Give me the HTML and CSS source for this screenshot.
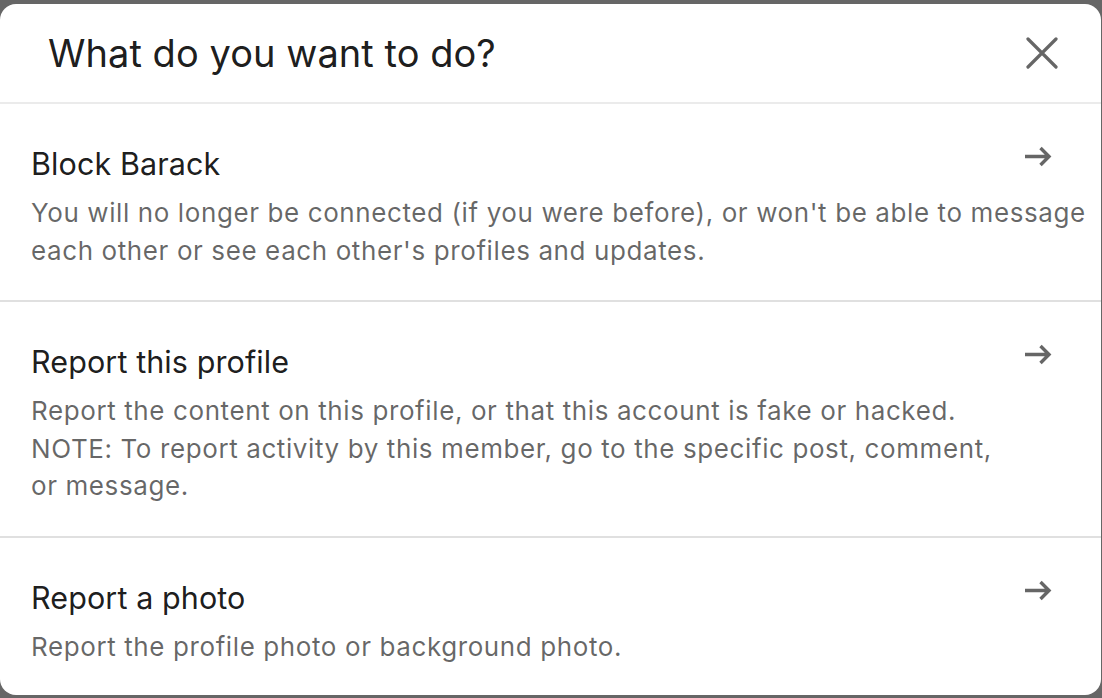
FILE: index.html
```html
<!DOCTYPE html>
<html>
<head>
<meta charset="utf-8">
<link rel="stylesheet" href="styles.css">
</head>
<body>
<div class="page">
  <div class="modal">
    <div class="modal-header">
      <h1 class="title">What do you want to do?</h1>
      <button class="close" aria-label="Dismiss">
        <svg width="32" height="32" viewBox="0 0 32 32"><path d="M2 2 L30 30 M30 2 L2 30" stroke="#666" stroke-width="3.2" stroke-linecap="round" fill="none"/></svg>
      </button>
    </div>
    <div class="item">
      <div class="item-head">
        <div class="item-title">Block Barack</div>
        <svg class="arrow" width="27" height="21" viewBox="0 0 27 21"><path d="M0 10.5 H24 M15.5 2 L24 10.5 L15.5 19" stroke="#666" stroke-width="3.4" fill="none"/></svg>
      </div>
      <div class="item-desc">You will no longer be connected (if you were before), or won't be able to message<br>each other or see each other's profiles and updates.</div>
    </div>
    <div class="item">
      <div class="item-head">
        <div class="item-title">Report this profile</div>
        <svg class="arrow" width="27" height="21" viewBox="0 0 27 21"><path d="M0 10.5 H24 M15.5 2 L24 10.5 L15.5 19" stroke="#666" stroke-width="3.4" fill="none"/></svg>
      </div>
      <div class="item-desc">Report the content on this profile, or that this account is fake or hacked.<br>NOTE: To report activity by this member, go to the specific post, comment,<br>or message.</div>
    </div>
    <div class="item">
      <div class="item-head">
        <div class="item-title">Report a photo</div>
        <svg class="arrow" width="27" height="21" viewBox="0 0 27 21"><path d="M0 10.5 H24 M15.5 2 L24 10.5 L15.5 19" stroke="#666" stroke-width="3.4" fill="none"/></svg>
      </div>
      <div class="item-desc">Report the profile photo or background photo.</div>
    </div>
  </div>
</div>
</body>
</html>
```
FILE: styles.css
```css
html, body {
  margin: 0;
  padding: 0;
  background: #666666;
  height: 100%;
  overflow: hidden;
}
body {
  font-family: Inter, "Noto Sans", sans-serif;
  -webkit-font-smoothing: antialiased;
}
.page {
  padding-top: 4px;
  width: 1101px;
}
.modal {
  background: #fff;
  border-radius: 16px;
  height: 691px;
  box-sizing: border-box;
  overflow: hidden;
}
.modal-header {
  height: 100px;
  box-sizing: border-box;
  border-bottom: 2px solid #ebebeb;
  display: flex;
  align-items: center;
  justify-content: space-between;
  padding: 0 43px 0 48px;
}
.title {
  margin: 0;
  font-size: 38px;
  font-weight: 400;
  color: rgba(0,0,0,0.9);
  letter-spacing: 0.05px;
}
.close {
  background: none;
  border: 0;
  padding: 0;
  width: 32px;
  height: 32px;
  display: flex;
}
.item {
  border-bottom: 2px solid #e0e0e0;
  padding: 38px 16px 31px 31px;
}
.item:last-child {
  border-bottom: 0;
}
.item-head {
  display: flex;
  justify-content: space-between;
  align-items: flex-start;
  padding-right: 33px;
}
.item-title {
  font-size: 30.5px;
  line-height: 44px;
  letter-spacing: 0.1px;
  color: rgba(0,0,0,0.9);
  margin-bottom: 8px;
}
.arrow {
  margin-top: 4px;
}
.item-desc {
  font-size: 26px;
  line-height: 37.5px;
  letter-spacing: 0.6px;
  color: rgba(0,0,0,0.6);
  white-space: nowrap;
}
```
